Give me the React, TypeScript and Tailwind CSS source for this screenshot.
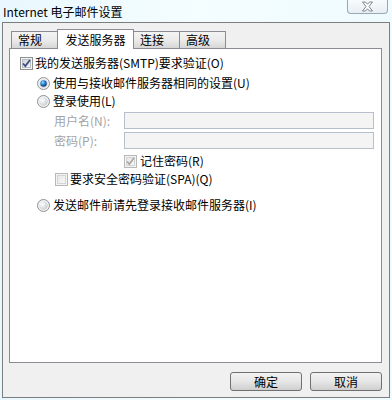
import type { ReactNode } from 'react';

const font = { fontFamily: '"Noto Sans CJK SC", "Noto Sans", sans-serif' };

function CheckBox({ checked, disabled }: { checked?: boolean; disabled?: boolean }) {
  const edge = disabled ? '#b8b8b8' : '#8e8f8f';
  const mark = disabled ? '#a9a9a9' : '#3c4f82';
  return (
    <svg width="13" height="13" viewBox="0 0 13 13" className="shrink-0">
      <defs>
        <linearGradient id={disabled ? 'cbd' : 'cb'} x1="0" y1="0" x2="1" y2="1">
          <stop offset="0" stopColor={disabled ? '#e6e6e6' : '#cdd1d7'} />
          <stop offset="1" stopColor={disabled ? '#f8f8f8' : '#f7f7f7'} />
        </linearGradient>
      </defs>
      <rect x="0.5" y="0.5" width="12" height="12" fill="#f4f4f4" stroke={edge} />
      <rect x="2.5" y="2.5" width="8" height="8" fill={`url(#${disabled ? 'cbd' : 'cb'})`} stroke={disabled ? '#d4d4d4' : '#b9bdc4'} />
      {checked ? (
        <path d="M3 6.5 L5.3 9 L10 3" fill="none" stroke={mark} strokeWidth="1.8" />
      ) : null}
    </svg>
  );
}

function Radio({ checked }: { checked?: boolean }) {
  return (
    <svg width="13" height="13" viewBox="0 0 13 13" className="shrink-0">
      <defs>
        <radialGradient id="rg" cx="0.35" cy="0.35" r="0.7">
          <stop offset="0" stopColor="#ffffff" />
          <stop offset="1" stopColor="#c9cdd2" />
        </radialGradient>
        <radialGradient id="rb" cx="0.4" cy="0.35" r="0.6">
          <stop offset="0" stopColor="#9be0ff" />
          <stop offset="0.5" stopColor="#2a8de0" />
          <stop offset="1" stopColor="#0f3f7d" />
        </radialGradient>
      </defs>
      <circle cx="6.5" cy="6.5" r="6" fill="#f2f2f2" stroke="#8e8f8f" />
      <circle cx="6.5" cy="6.5" r="4.2" fill="url(#rg)" />
      {checked ? <circle cx="6.5" cy="6.5" r="3.2" fill="url(#rb)" /> : null}
    </svg>
  );
}

function Row({ children, className }: { children: ReactNode; className: string }) {
  return <div className={`flex h-[16px] items-center text-[12px] leading-[16px] text-black ${className}`}>{children}</div>;
}

function Tab({ label, active, w }: { label: string; active?: boolean; w: string }) {
  if (active) {
    return (
      <div
        className={`relative z-10 -mb-px -ml-px flex h-[20px] ${w} items-center justify-center border border-b-0 border-[#898c95] bg-white text-[12px] leading-[16px] text-black`}
      >
        {label}
      </div>
    );
  }
  return (
    <div
      className={`-ml-px flex h-[17px] ${w} items-center justify-start border border-b-0 border-[#898c95] bg-gradient-to-b from-[#f3f3f3] via-[#ebebeb] to-[#d6d6d6] pl-[6px] text-[12px] leading-[16px] text-black first:ml-0`}
    >
      {label}
    </div>
  );
}

function Button({ label }: { label: string }) {
  return (
    <button
      type="button"
      className="flex h-[19px] w-[72px] items-center justify-center rounded-[3px] border border-[#707070] bg-gradient-to-b from-[#f2f2f2] via-[#e6e6e6] to-[#cfcfcf] text-[12px] leading-[16px] text-black"
    >
      {label}
    </button>
  );
}

export default function App() {
  return (
    <div
      className="relative h-[400px] w-[392px] overflow-hidden bg-gradient-to-r from-[#e9f8fe] via-[#f4fdff] to-[#eefbff]"
      style={font}
    >
      <div className="flex h-[22px] items-start justify-between">
        <span className="pl-[3px] pt-[4px] text-[12px] leading-[16px] text-black">Internet 电子邮件设置</span>
        <div className="mr-[4px] flex h-[14px] w-[41px] items-center justify-center rounded-b-[4px] border border-t-0 border-[#9aa7b3] bg-gradient-to-b from-[#f8fbfd] to-[#e7eef4]">
          <svg width="13" height="11" viewBox="0 0 13 11">
            <path
              d="M1.5 1 L4.5 1 L6.5 3.2 L8.5 1 L11.5 1 L8 5.5 L11.5 10 L8.5 10 L6.5 7.8 L4.5 10 L1.5 10 L5 5.5 Z"
              fill="#fdfdfd"
              stroke="#6f7880"
              strokeWidth="0.9"
            />
          </svg>
        </div>
      </div>

      <div className="ml-[2px] flex h-[376px] w-[388px] flex-col border border-[#7d7d7d] bg-[#f0f0f0] pl-[6px] pr-[7px] pt-[6px]">
        <div className="flex h-[19px] items-end pl-[2px]">
          <Tab label="常规" w="w-[47px]" />
          <Tab label="发送服务器" active w="w-[77px]" />
          <Tab label="连接" w="w-[47px]" />
          <Tab label="高级" w="w-[47px]" />
        </div>

        <div className="relative flex h-[315px] flex-col border border-[#898c95] bg-white pl-[10px] pt-[6px]">
          <Row className="gap-[2px]">
            <CheckBox checked />
            <span>我的发送服务器(SMTP)要求验证(O)</span>
          </Row>
          <Row className="mt-[4px] gap-[3px] pl-[17px]">
            <Radio checked />
            <span>使用与接收邮件服务器相同的设置(U)</span>
          </Row>
          <Row className="mt-[2px] gap-[3px] pl-[17px]">
            <Radio />
            <span>登录使用(L)</span>
          </Row>
          <div className="mt-[3px] flex h-[17px] items-center pl-[34px]">
            <span className="w-[70px] text-[12px] leading-[16px] text-[#a3a3a3]">用户名(N):</span>
            <div className="h-[17px] w-[250px] border border-[#b5c0cc] bg-[#f4f4f4]" />
          </div>
          <div className="mt-[3px] flex h-[17px] items-center pl-[34px]">
            <span className="w-[70px] text-[12px] leading-[16px] text-[#a3a3a3]">密码(P):</span>
            <div className="h-[17px] w-[250px] border border-[#b5c0cc] bg-[#f4f4f4]" />
          </div>
          <Row className="mt-[4px] gap-[3px] pl-[104px]">
            <CheckBox checked disabled />
            <span>记住密码(R)</span>
          </Row>
          <Row className="mt-[2px] gap-[2px] pl-[35px]">
            <CheckBox disabled />
            <span>要求安全密码验证(SPA)(Q)</span>
          </Row>
          <Row className="mt-[10px] gap-[3px] pl-[17px]">
            <Radio />
            <span>发送邮件前请先登录接收邮件服务器(I)</span>
          </Row>
        </div>

        <div className="mt-[9px] flex justify-end gap-[8px]">
          <Button label="确定" />
          <Button label="取消" />
        </div>
      </div>
    </div>
  );
}
